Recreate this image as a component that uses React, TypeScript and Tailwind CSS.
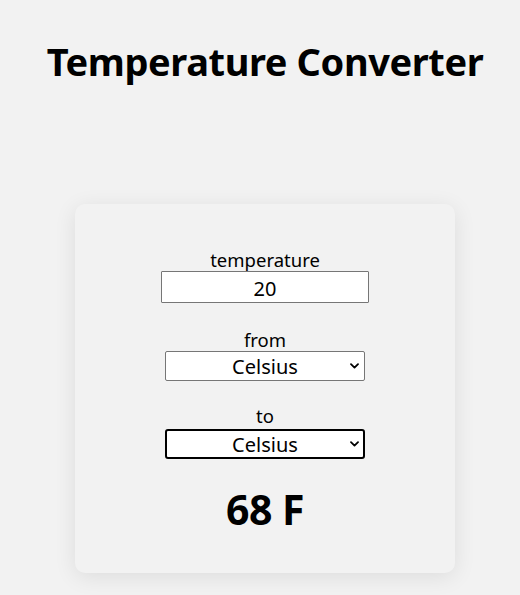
import React from "react";

function Chevron() {
  return (
    <svg
      className="pointer-events-none absolute right-[6px] top-1/2 -translate-y-1/2"
      width="9"
      height="6"
      viewBox="0 0 9 6"
      fill="none"
    >
      <path d="M1 1.2 L4.5 4.6 L8 1.2" stroke="#000" strokeWidth="1.8" strokeLinecap="round" strokeLinejoin="round" />
    </svg>
  );
}

function Select({ focused }: { focused?: boolean }) {
  return (
    <div className="relative w-[200px] h-[30px]">
      <select
        defaultValue="Celsius"
        className={
          "appearance-none w-full h-full bg-white text-center text-[20px] leading-none text-black outline-none pt-[2px] " +
          (focused ? "border-2 border-black rounded-[3px]" : "border border-[#767676] rounded-[2px]")
        }
        style={{ textAlignLast: "center", fontFamily: "'Noto Sans', 'Open Sans', sans-serif" }}
      >
        <option>Celsius</option>
        <option>Fahrenheit</option>
        <option>Kelvin</option>
      </select>
      <Chevron />
    </div>
  );
}

export default function App() {
  return (
    <div
      className="min-h-[595px] w-full bg-[#f2f2f2] pl-[10px] text-black"
      style={{ fontFamily: "'Noto Sans', 'Open Sans', sans-serif" }}
    >
      <div className="flex flex-col items-center">
        <h1 className="mt-[34px] text-[38px] font-bold leading-[54px] tracking-[-0.4px]">
          Temperature Converter
        </h1>
        <div className="mt-[116px] flex h-[369px] w-[380px] flex-col items-center rounded-[10px] bg-[#f2f2f2] pt-[45px] shadow-[0_4px_22px_rgba(0,0,0,0.09)]">
          <label className="text-[18.5px] leading-[22px]">temperature</label>
          <input
            defaultValue="20"
            className="mt-[0px] h-[32px] w-[208px] border border-[#767676] bg-white pt-[2px] text-center text-[20px] outline-none rounded-[1px]"
          />
          <label className="mt-[26px] text-[18.5px] leading-[22px]">from</label>
          <div className="mt-[0px]">
            <Select />
          </div>
          <label className="mt-[24px] text-[18.5px] leading-[22px]">to</label>
          <div className="mt-[2px]">
            <Select focused />
          </div>
          <div className="mt-[24px] text-[41px] font-bold leading-[52px] tracking-[-0.5px]">68 F</div>
        </div>
      </div>
    </div>
  );
}
